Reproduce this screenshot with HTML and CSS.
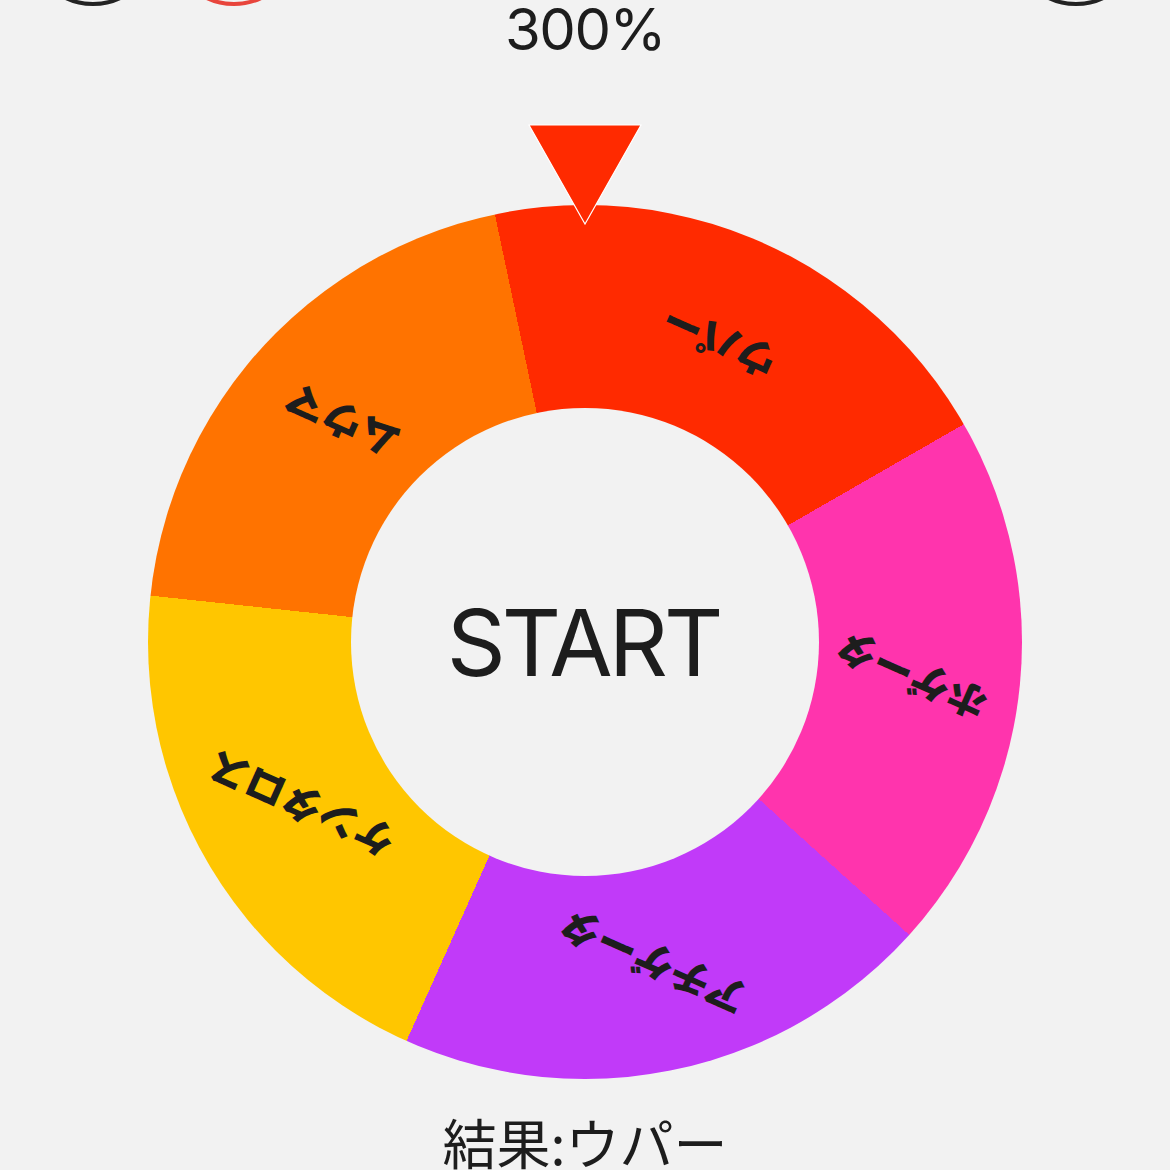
FILE: index.html
```html
<!DOCTYPE html>
<html lang="ja">
<head>
<meta charset="utf-8">
<title>ルーレット</title>
<link rel="stylesheet" href="styles.css">
</head>
<body>
<div class="page">
  <div class="buttons">
    <div class="left-group">
      <span class="ring ring-dark"></span>
      <span class="ring ring-red"></span>
    </div>
    <span class="ring ring-dark"></span>
  </div>
  <div class="percent">300%</div>
  <div class="wheel-wrap">
    <svg class="pointer" viewBox="0 0 114 101" width="114" height="101" aria-hidden="true">
      <polygon points="1,1 113,1 57,100" fill="#ff2a00" stroke="#ffffff" stroke-width="1.2" stroke-linejoin="miter"/>
    </svg>
    <div class="wheel">
      <span class="label l1">ウパー</span>
      <span class="label l2">ホゲータ</span>
      <span class="label l3">アチゲータ</span>
      <span class="label l4">ケンタロス</span>
      <span class="label l5">ムウマ</span>
      <div class="start">START</div>
    </div>
  </div>
  <div class="result">結果:ウパー</div>
</div>
</body>
</html>
```
FILE: styles.css
```css
html, body {
  margin: 0;
  padding: 0;
  background: #f2f2f2;
}
body {
  width: 1170px;
  height: 1170px;
  overflow: hidden;
  font-family: Inter, "Noto Sans CJK JP", sans-serif;
  color: #1d1d1d;
}
.page {
  display: flex;
  flex-direction: column;
  align-items: center;
}
.buttons {
  align-self: stretch;
  height: 0;
  display: flex;
  justify-content: space-between;
  align-items: flex-end;
  padding: 0 29px 0 28px;
}
.left-group {
  display: flex;
  align-items: flex-end;
  gap: 11px;
}
.ring {
  display: block;
  width: 130px;
  height: 130px;
  box-sizing: border-box;
  border-radius: 50%;
  border: 4px solid #232323;
  margin-bottom: -6px;
}
.ring-red {
  border-color: #e8453c;
}
.percent {
  font-family: Inter, "Liberation Sans", sans-serif;
  font-size: 58px;
  line-height: 58px;
  height: 58px;
  letter-spacing: -1.5px;
  color: #1d1d1d;
}
.wheel-wrap {
  position: relative;
  margin-top: 147px;
  width: 874px;
  height: 874px;
}
.pointer {
  position: absolute;
  top: -81px;
  left: 50%;
  margin-left: -57px;
  z-index: 2;
  display: block;
}
.wheel {
  width: 874px;
  height: 874px;
  border-radius: 50%;
  background: conic-gradient(from -11.9deg,
    #ff2a00 0deg 72deg,
    #ff34ad 72deg 144deg,
    #c13af9 144deg 216deg,
    #ffc600 216deg 288deg,
    #ff7300 288deg 360deg);
  display: grid;
  place-items: center;
  position: relative;
}
.start {
  width: 468px;
  height: 468px;
  border-radius: 50%;
  background: #f2f2f2;
  display: flex;
  align-items: center;
  justify-content: center;
  font-family: Inter, "Liberation Sans", sans-serif;
  font-size: 92px;
  letter-spacing: -4px;
  text-indent: -4px;
  color: #1d1d1d;
  position: relative;
  z-index: 1;
}
.label {
  position: absolute;
  left: 50%;
  top: 50%;
  font-family: "Noto Sans CJK JP", sans-serif;
  font-weight: 900;
  font-size: 40px;
  line-height: 1;
  white-space: nowrap;
  color: #1d1d1d;
  --d: 328px;
  transform: translate(-50%, -50%) rotate(var(--a)) translateY(calc(-1 * var(--d))) rotate(calc(204deg - var(--a)));
}
.l1 { --a: 24.1deg; }
.l2 { --a: 96.1deg; }
.l3 { --a: 168.1deg; }
.l4 { --a: 240.1deg; }
.l5 { --a: 312.1deg; }
.result {
  margin-top: 36px;
  font-family: "Noto Sans CJK JP", sans-serif;
  font-size: 54px;
  line-height: 54px;
  color: #1d1d1d;
}
```
